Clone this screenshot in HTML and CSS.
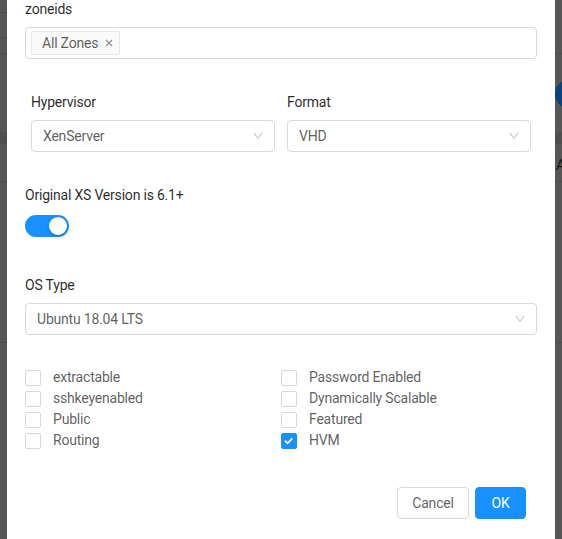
FILE: index.html
```html
<!DOCTYPE html>
<html lang="en">
<head>
<meta charset="utf-8">
<title>Register Template</title>
<link rel="stylesheet" href="styles.css">
</head>
<body>
<div class="screen">
  <div class="strip strip-left"></div>
  <div class="modal">
    <div class="field">
      <div class="label">zoneids</div>
      <div class="select select-multi">
        <span class="tag">All Zones
          <svg class="tag-close" viewBox="0 0 8 8" width="8" height="8"><path d="M1 1L7 7M7 1L1 7" stroke="currentColor" stroke-width="1.1" fill="none"/></svg>
        </span>
      </div>
    </div>

    <div class="row">
      <div class="col">
        <div class="label">Hypervisor</div>
        <div class="select">
          <span class="value">XenServer</span>
          <svg class="arrow" viewBox="0 0 1024 1024" width="12" height="12"><path fill="currentColor" d="M884 256h-75c-5.1 0-9.9 2.5-12.9 6.6L512 654.2 227.9 262.6c-3-4.1-7.8-6.6-12.9-6.6h-75c-6.5 0-10.3 7.4-6.5 12.7l352.6 486.1c12.8 17.6 39 17.6 51.7 0l352.6-486.1c3.9-5.3.1-12.7-6.4-12.7z"/></svg>
        </div>
      </div>
      <div class="col">
        <div class="label">Format</div>
        <div class="select">
          <span class="value">VHD</span>
          <svg class="arrow" viewBox="0 0 1024 1024" width="12" height="12"><path fill="currentColor" d="M884 256h-75c-5.1 0-9.9 2.5-12.9 6.6L512 654.2 227.9 262.6c-3-4.1-7.8-6.6-12.9-6.6h-75c-6.5 0-10.3 7.4-6.5 12.7l352.6 486.1c12.8 17.6 39 17.6 51.7 0l352.6-486.1c3.9-5.3.1-12.7-6.4-12.7z"/></svg>
        </div>
      </div>
    </div>

    <div class="field field-switch">
      <div class="label">Original XS Version is 6.1+</div>
      <div class="switch"><span class="knob"></span></div>
    </div>

    <div class="field field-os">
      <div class="label">OS Type</div>
      <div class="select">
        <span class="value">Ubuntu 18.04 LTS</span>
        <svg class="arrow" viewBox="0 0 1024 1024" width="12" height="12"><path fill="currentColor" d="M884 256h-75c-5.1 0-9.9 2.5-12.9 6.6L512 654.2 227.9 262.6c-3-4.1-7.8-6.6-12.9-6.6h-75c-6.5 0-10.3 7.4-6.5 12.7l352.6 486.1c12.8 17.6 39 17.6 51.7 0l352.6-486.1c3.9-5.3.1-12.7-6.4-12.7z"/></svg>
      </div>
    </div>

    <div class="checks">
      <label class="check"><span class="box"></span>extractable</label>
      <label class="check"><span class="box"></span>Password Enabled</label>
      <label class="check"><span class="box"></span>sshkeyenabled</label>
      <label class="check"><span class="box"></span>Dynamically Scalable</label>
      <label class="check"><span class="box"></span>Public</label>
      <label class="check"><span class="box"></span>Featured</label>
      <label class="check"><span class="box"></span>Routing</label>
      <label class="check"><span class="box box-checked"><svg viewBox="0 0 16 16" width="14" height="14"><path d="M3.3 7.6L6.4 10.6L11.9 4.9" stroke="#fff" stroke-width="2" fill="none"/></svg></span>HVM</label>
    </div>

    <div class="footer">
      <button class="btn btn-default">Cancel</button>
      <button class="btn btn-primary">OK</button>
    </div>
  </div>
  <div class="strip strip-right">
    <div class="bg-avatar"></div>
    <div class="bg-text">A</div>
  </div>
</div>
</body>
</html>
```

FILE: styles.css
```css
* { box-sizing: border-box; }
html, body { margin: 0; padding: 0; }
body {
  width: 562px;
  height: 539px;
  overflow: hidden;
  background: #555;
  font-family: Roboto, "Liberation Sans", sans-serif;
  font-size: 14px;
  letter-spacing: -0.2px;
}
.screen { display: flex; height: 539px; }

.strip {
  width: 7px;
  flex: none;
  overflow: hidden;
  background-color: #565656;
  background-image:
    linear-gradient(#4b4b4b, #4b4b4b),
    linear-gradient(#4b4b4b, #4b4b4b),
    linear-gradient(#4b4b4b, #4b4b4b),
    linear-gradient(#4f4f4f, #4f4f4f),
    linear-gradient(#4b4b4b, #4b4b4b),
    linear-gradient(#4b4b4b, #4b4b4b),
    linear-gradient(#4b4b4b, #4b4b4b);
  background-repeat: no-repeat;
  background-size: 100% 1px, 100% 1px, 100% 1px, 100% 11px, 100% 1px, 100% 1px, 100% 1px;
  background-position: 0 12px, 0 37px, 0 53px, 0 132px, 0 143px, 0 181px, 0 342px;
}
.strip-right {
  background-image:
    linear-gradient(#4b4b4b, #4b4b4b),
    linear-gradient(#4f4f4f, #4f4f4f),
    linear-gradient(#4b4b4b, #4b4b4b),
    linear-gradient(#4b4b4b, #4b4b4b),
    linear-gradient(#4b4b4b, #4b4b4b);
  background-size: 100% 1px, 100% 11px, 100% 1px, 100% 1px, 100% 1px;
  background-position: 0 53px, 0 132px, 0 143px, 0 181px, 0 342px;
}
.bg-avatar {
  margin-top: 80px;
  width: 28px;
  height: 28px;
  border-radius: 50%;
  background: #0b427c;
}
.bg-text {
  margin-top: 48px;
  margin-left: 1px;
  line-height: 18px;
  color: #161616;
  white-space: nowrap;
}

.modal {
  width: 548px;
  flex: none;
  background: #fff;
  padding: 0 18px;
  display: flex;
  flex-direction: column;
}

.label {
  height: 18px;
  line-height: 18px;
  color: rgba(0, 0, 0, 0.85);
  white-space: nowrap;
}

.select {
  margin-top: 9px;
  height: 32px;
  border: 1px solid #d9d9d9;
  border-radius: 4px;
  background: #fff;
  display: flex;
  align-items: center;
  justify-content: space-between;
  padding: 0 11px;
  line-height: 22px;
  color: rgba(0, 0, 0, 0.65);
}
.select-multi { padding: 0 5px; justify-content: flex-start; }
.arrow { color: rgba(0, 0, 0, 0.25); flex: none; margin-right: -1px; }

.tag {
  display: inline-flex;
  align-items: center;
  height: 24px;
  padding: 0 6px 0 10px;
  background: #fafafa;
  border: 1px solid #e8e8e8;
  border-radius: 2px;
  color: rgba(0, 0, 0, 0.65);
  line-height: 22px;
}
.tag-close { margin-left: 7px; color: rgba(0, 0, 0, 0.45); }

.row {
  margin-top: 34px;
  padding: 0 6px;
  display: grid;
  grid-template-columns: 1fr 1fr;
  column-gap: 12px;
}

.field-switch { margin-top: 34px; }
.switch {
  margin-top: 11px;
  width: 44px;
  height: 22px;
  border-radius: 11px;
  background: #1890ff;
  display: flex;
  justify-content: flex-end;
  align-items: center;
  padding: 0 2px;
}
.knob {
  width: 18px;
  height: 18px;
  border-radius: 50%;
  background: #fff;
  box-shadow: 0 2px 4px rgba(0, 35, 11, 0.2);
}

.field-os { margin-top: 39px; }

.checks {
  margin-top: 32px;
  display: grid;
  grid-template-columns: 256px 256px;
  grid-auto-rows: 21px;
}
.check {
  display: flex;
  align-items: center;
  height: 21px;
  line-height: 21px;
  color: rgba(0, 0, 0, 0.65);
  white-space: nowrap;
}
.box {
  width: 16px;
  height: 16px;
  flex: none;
  border: 1px solid #d9d9d9;
  border-radius: 2px;
  background: #fff;
  margin-right: 12px;
  display: flex;
  align-items: center;
  justify-content: center;
}
.box-checked { background: #1890ff; border-color: #1890ff; }

.footer {
  margin-top: 36px;
  padding-right: 11px;
  display: flex;
  justify-content: flex-end;
  gap: 6px;
}
.btn {
  height: 32px;
  padding: 0 15px;
  border-radius: 4px;
  font-family: inherit;
  font-size: 14px;
  letter-spacing: -0.2px;
  line-height: 30px;
  border: 1px solid #d9d9d9;
  background: #fff;
  color: rgba(0, 0, 0, 0.65);
}
.btn-default { width: 72px; padding: 0; }
.btn-primary { width: 51px; padding: 0; background: #1890ff; border-color: #1890ff; color: #fff; }
```
